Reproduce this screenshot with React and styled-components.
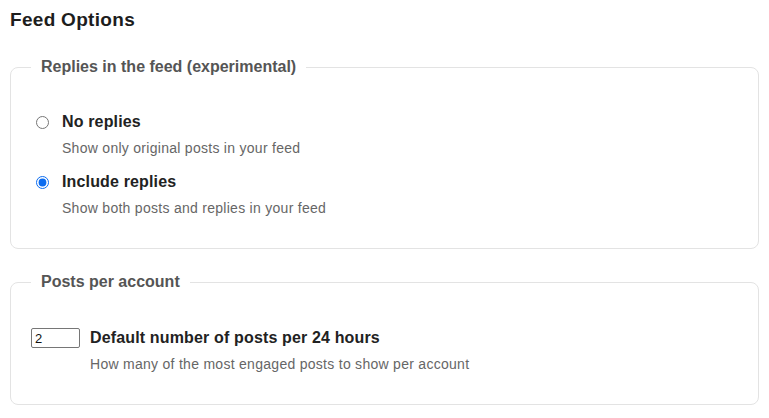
import React, { useState } from "react";
import styled, { createGlobalStyle } from "styled-components";

const GlobalStyle = createGlobalStyle`
    body {
        margin: 0;
        padding: 9px 10px 0 10px;
        background: #ffffff;
        font-family: "Liberation Sans", Arial, sans-serif;
        color: #222;
    }
`;

const FeedOptions = () => {
    const [replies, setReplies] = useState("include");
    const [posts, setPosts] = useState("2");

    return (
        <>
            <GlobalStyle />
            <Page>
                <Heading>Feed Options</Heading>

                <Group>
                    <Legend>Replies in the feed (experimental)</Legend>
                    <OptionList>
                        <OptionRow>
                            <Radio
                                type="radio"
                                name="replies"
                                checked={replies === "none"}
                                onChange={() => setReplies("none")}
                            />
                            <OptionText>
                                <OptionTitle>No replies</OptionTitle>
                                <OptionDesc>Show only original posts in your feed</OptionDesc>
                            </OptionText>
                        </OptionRow>
                        <OptionRow>
                            <Radio
                                type="radio"
                                name="replies"
                                checked={replies === "include"}
                                onChange={() => setReplies("include")}
                            />
                            <OptionText>
                                <OptionTitle>Include replies</OptionTitle>
                                <OptionDesc>Show both posts and replies in your feed</OptionDesc>
                            </OptionText>
                        </OptionRow>
                    </OptionList>
                </Group>

                <Group>
                    <Legend>Posts per account</Legend>
                    <OptionList>
                        <NumberRow>
                            <NumberInput
                                type="text"
                                value={posts}
                                onChange={(e) => setPosts(e.target.value)}
                            />
                            <OptionText>
                                <OptionTitle>Default number of posts per 24 hours</OptionTitle>
                                <OptionDesc>How many of the most engaged posts to show per account</OptionDesc>
                            </OptionText>
                        </NumberRow>
                    </OptionList>
                </Group>
            </Page>
        </>
    );
};

const Page = styled.div`
    display: flex;
    flex-direction: column;
    width: 749px;
`;

const Heading = styled.h2`
    margin: 0 0 26px 0;
    font-size: 19px;
    line-height: 22px;
    font-weight: 700;
    letter-spacing: 0.3px;
    color: #1d1d1d;
`;

const Group = styled.fieldset`
    margin: 0 0 23px 0;
    padding: 35px 20px 31px 20px;
    border: 1px solid #e3e3e3;
    border-radius: 8px;
    min-width: 0;
`;

const Legend = styled.legend`
    padding: 0 10px;
    font-size: 16px;
    line-height: 20px;
    font-weight: 600;
    color: #555;
`;

const OptionList = styled.div`
    display: flex;
    flex-direction: column;
    gap: 15px;
`;

const OptionRow = styled.label`
    display: flex;
    align-items: flex-start;
`;

const NumberRow = styled.label`
    display: flex;
    align-items: flex-start;
    margin-top: 1px;
`;

const Radio = styled.input`
    width: 13px;
    height: 13px;
    margin: 4px 13px 0 5px;
    accent-color: #0b6cf0;
`;

const NumberInput = styled.input`
    box-sizing: border-box;
    width: 49px;
    height: 20px;
    margin: 0 10px 0 0;
    padding: 0 3px;
    border: 1px solid #767676;
    border-radius: 2px;
    font-family: "Liberation Sans", Arial, sans-serif;
    font-size: 13px;
    color: #111;
`;

const OptionText = styled.div`
    display: flex;
    flex-direction: column;
    gap: 7px;
`;

const OptionTitle = styled.div`
    font-size: 16px;
    line-height: 20px;
    font-weight: 700;
    letter-spacing: 0.15px;
    color: #222;
`;

const OptionDesc = styled.div`
    font-size: 14px;
    line-height: 18px;
    letter-spacing: 0.28px;
    color: #666;
`;

export default FeedOptions;
